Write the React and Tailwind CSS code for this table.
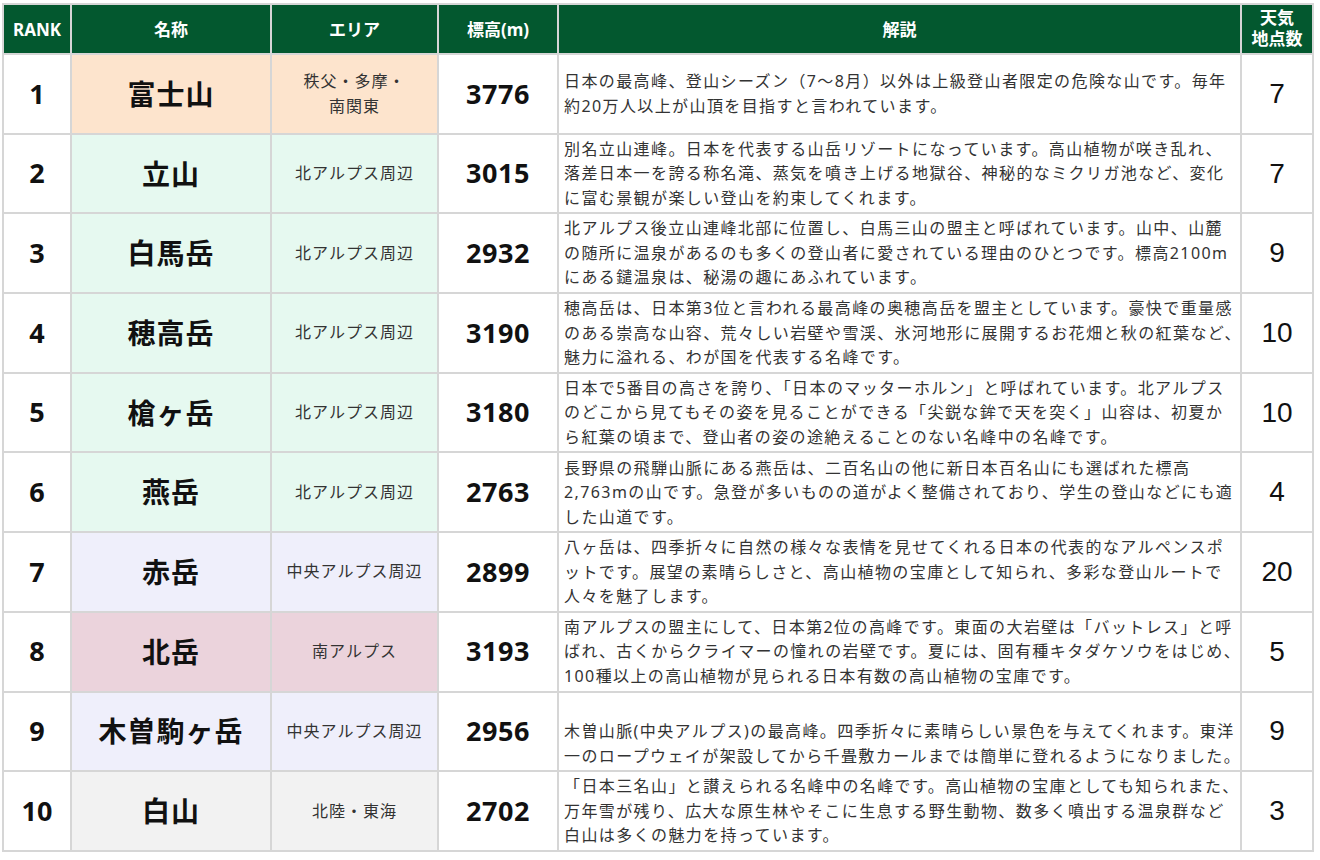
import React from 'react';

const bg = {
  fuji: 'bg-[#fde4cd]',
  north: 'bg-[#e6f9f0]',
  center: 'bg-[#efeffb]',
  south: 'bg-[#ebd3dc]',
  hokuriku: 'bg-[#f2f2f2]',
};

const rows = [
  { rank: 1, name: '富士山', area: ['秩父・多摩・', '南関東'], tone: bg.fuji, height: 3776, count: 7,
    text: ['日本の最高峰、登山シーズン（7～8月）以外は上級登山者限定の危険な山です。毎年', '約20万人以上が山頂を目指すと言われています。'] },
  { rank: 2, name: '立山', area: ['北アルプス周辺'], tone: bg.north, height: 3015, count: 7,
    text: ['別名立山連峰。日本を代表する山岳リゾートになっています。高山植物が咲き乱れ、', '落差日本一を誇る称名滝、蒸気を噴き上げる地獄谷、神秘的なミクリガ池など、変化', 'に富む景観が楽しい登山を約束してくれます。'] },
  { rank: 3, name: '白馬岳', area: ['北アルプス周辺'], tone: bg.north, height: 2932, count: 9,
    text: ['北アルプス後立山連峰北部に位置し、白馬三山の盟主と呼ばれています。山中、山麓', 'の随所に温泉があるのも多くの登山者に愛されている理由のひとつです。標高2100m', 'にある鑓温泉は、秘湯の趣にあふれています。'] },
  { rank: 4, name: '穂高岳', area: ['北アルプス周辺'], tone: bg.north, height: 3190, count: 10,
    text: ['穂高岳は、日本第3位と言われる最高峰の奥穂高岳を盟主としています。豪快で重量感', 'のある崇高な山容、荒々しい岩壁や雪渓、氷河地形に展開するお花畑と秋の紅葉など、', '魅力に溢れる、わが国を代表する名峰です。'] },
  { rank: 5, name: '槍ヶ岳', area: ['北アルプス周辺'], tone: bg.north, height: 3180, count: 10,
    text: ['日本で5番目の高さを誇り、「日本のマッターホルン」と呼ばれています。北アルプス', 'のどこから見てもその姿を見ることができる「尖鋭な鉾で天を突く」山容は、初夏か', 'ら紅葉の頃まで、登山者の姿の途絶えることのない名峰中の名峰です。'] },
  { rank: 6, name: '燕岳', area: ['北アルプス周辺'], tone: bg.north, height: 2763, count: 4,
    text: ['長野県の飛騨山脈にある燕岳は、二百名山の他に新日本百名山にも選ばれた標高', '2,763mの山です。急登が多いものの道がよく整備されており、学生の登山などにも適', 'した山道です。'] },
  { rank: 7, name: '赤岳', area: ['中央アルプス周辺'], tone: bg.center, height: 2899, count: 20,
    text: ['八ヶ岳は、四季折々に自然の様々な表情を見せてくれる日本の代表的なアルペンスポ', 'ットです。展望の素晴らしさと、高山植物の宝庫として知られ、多彩な登山ルートで', '人々を魅了します。'] },
  { rank: 8, name: '北岳', area: ['南アルプス'], tone: bg.south, height: 3193, count: 5,
    text: ['南アルプスの盟主にして、日本第2位の高峰です。東面の大岩壁は「バットレス」と呼', 'ばれ、古くからクライマーの憧れの岩壁です。夏には、固有種キタダケソウをはじめ、', '100種以上の高山植物が見られる日本有数の高山植物の宝庫です。'] },
  { rank: 9, name: '木曽駒ヶ岳', area: ['中央アルプス周辺'], tone: bg.center, height: 2956, count: 9,
    text: ['\u00a0', '木曽山脈(中央アルプス)の最高峰。四季折々に素晴らしい景色を与えてくれます。東洋', '一のロープウェイが架設してから千畳敷カールまでは簡単に登れるようになりました。'] },
  { rank: 10, name: '白山', area: ['北陸・東海'], tone: bg.hokuriku, height: 2702, count: 3,
    text: ['「日本三名山」と讃えられる名峰中の名峰です。高山植物の宝庫としても知られまた、', '万年雪が残り、広大な原生林やそこに生息する野生動物、数多く噴出する温泉群など', '白山は多くの魅力を持っています。'] },
];

const cell = 'border-2 border-[#d6d6d6]';
const head = `${cell} bg-[#03582f] text-white font-bold text-[17px] leading-[21px]`;

const App = () => {
  return (
    <div className="w-[1320px] h-[860px] bg-white pt-[3px] pl-[2px] font-['Noto_Sans','Noto_Sans_CJK_JP',sans-serif]">
      <table className="table-fixed border-collapse w-[1310px]">
        <colgroup>
          <col className="w-[68px]" />
          <col className="w-[200px]" />
          <col className="w-[167px]" />
          <col className="w-[120px]" />
          <col className="w-[683px]" />
          <col className="w-[72px]" />
        </colgroup>
        <thead>
          <tr className="h-[50px]">
            <th className={head}>RANK</th>
            <th className={head}>名称</th>
            <th className={head}>エリア</th>
            <th className={head}>標高(m)</th>
            <th className={head}>解説</th>
            <th className={`${head} pb-[3px]`}>天気<br />地点数</th>
          </tr>
        </thead>
        <tbody>
          {rows.map((r) => (
            <tr key={r.rank} className="h-[79.7px]">
              <td className={`${cell} text-center font-bold text-[27px] text-[#111]`}>{r.rank}</td>
              <td className={`${cell} ${r.tone} text-center font-bold text-[28px] text-[#111] tracking-[1px]`}>{r.name}</td>
              <td className={`${cell} ${r.tone} text-center text-[16px] leading-[25px] text-[#333] tracking-[1px]`}>
                {r.area.map((a, i) => <div key={i}>{a}</div>)}
              </td>
              <td className={`${cell} text-center font-bold text-[27px] text-[#111] tracking-[0.5px]`}>{r.height}</td>
              <td className={`${cell} pl-[5px] text-[16px] leading-[24.5px] text-[#333] tracking-[1.4px] whitespace-nowrap`}>
                {r.text.map((t, i) => <div key={i}>{t}</div>)}
              </td>
              <td className={`${cell} text-center text-[28px] text-[#111] font-['Liberation_Sans',sans-serif]`}>{r.count}</td>
            </tr>
          ))}
        </tbody>
      </table>
    </div>
  );
};

export default App;
